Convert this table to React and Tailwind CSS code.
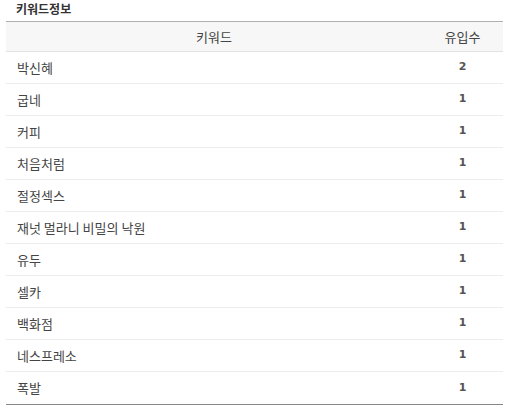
export default function App() {
  const rows = [
    ["박신혜", 2],
    ["굽네", 1],
    ["커피", 1],
    ["처음처럼", 1],
    ["절정섹스", 1],
    ["재넛 멀라니 비밀의 낙원", 1],
    ["유두", 1],
    ["셀카", 1],
    ["백화점", 1],
    ["네스프레소", 1],
    ["폭발", 1],
  ];
  return (
    <div className="w-[505px] h-[411px] bg-white overflow-hidden" style={{ fontFamily: '"Noto Sans CJK KR", "Noto Sans", sans-serif' }}>
      <div className="h-[21px] pl-[16px] text-[12px] font-bold text-[#333] leading-[17px]">키워드정보</div>
      <div className="ml-[6px] w-[497px] border-t border-t-[#b0b0b0] border-b border-b-[#888]">
        <div className="flex h-[30px] items-center bg-[#f7f7f7] border-b border-[#e3e3e3] text-[13px] text-[#444]">
          <div className="w-[416px] text-center">키워드</div>
          <div className="flex-1 text-center">유입수</div>
        </div>
        {rows.map(([k, v], i) => (
          <div key={i} className={`flex h-[32px] items-center text-[13px] text-[#444] ${i < rows.length - 1 ? "border-b border-[#ececec]" : ""}`}>
            <div className="w-[416px] pl-[11px]">{k}</div>
            <div className="flex-1 text-center text-[11px] font-bold text-[#555]" style={{ fontFamily: '"DejaVu Sans", sans-serif' }}>{v}</div>
          </div>
        ))}
      </div>
    </div>
  );
}
